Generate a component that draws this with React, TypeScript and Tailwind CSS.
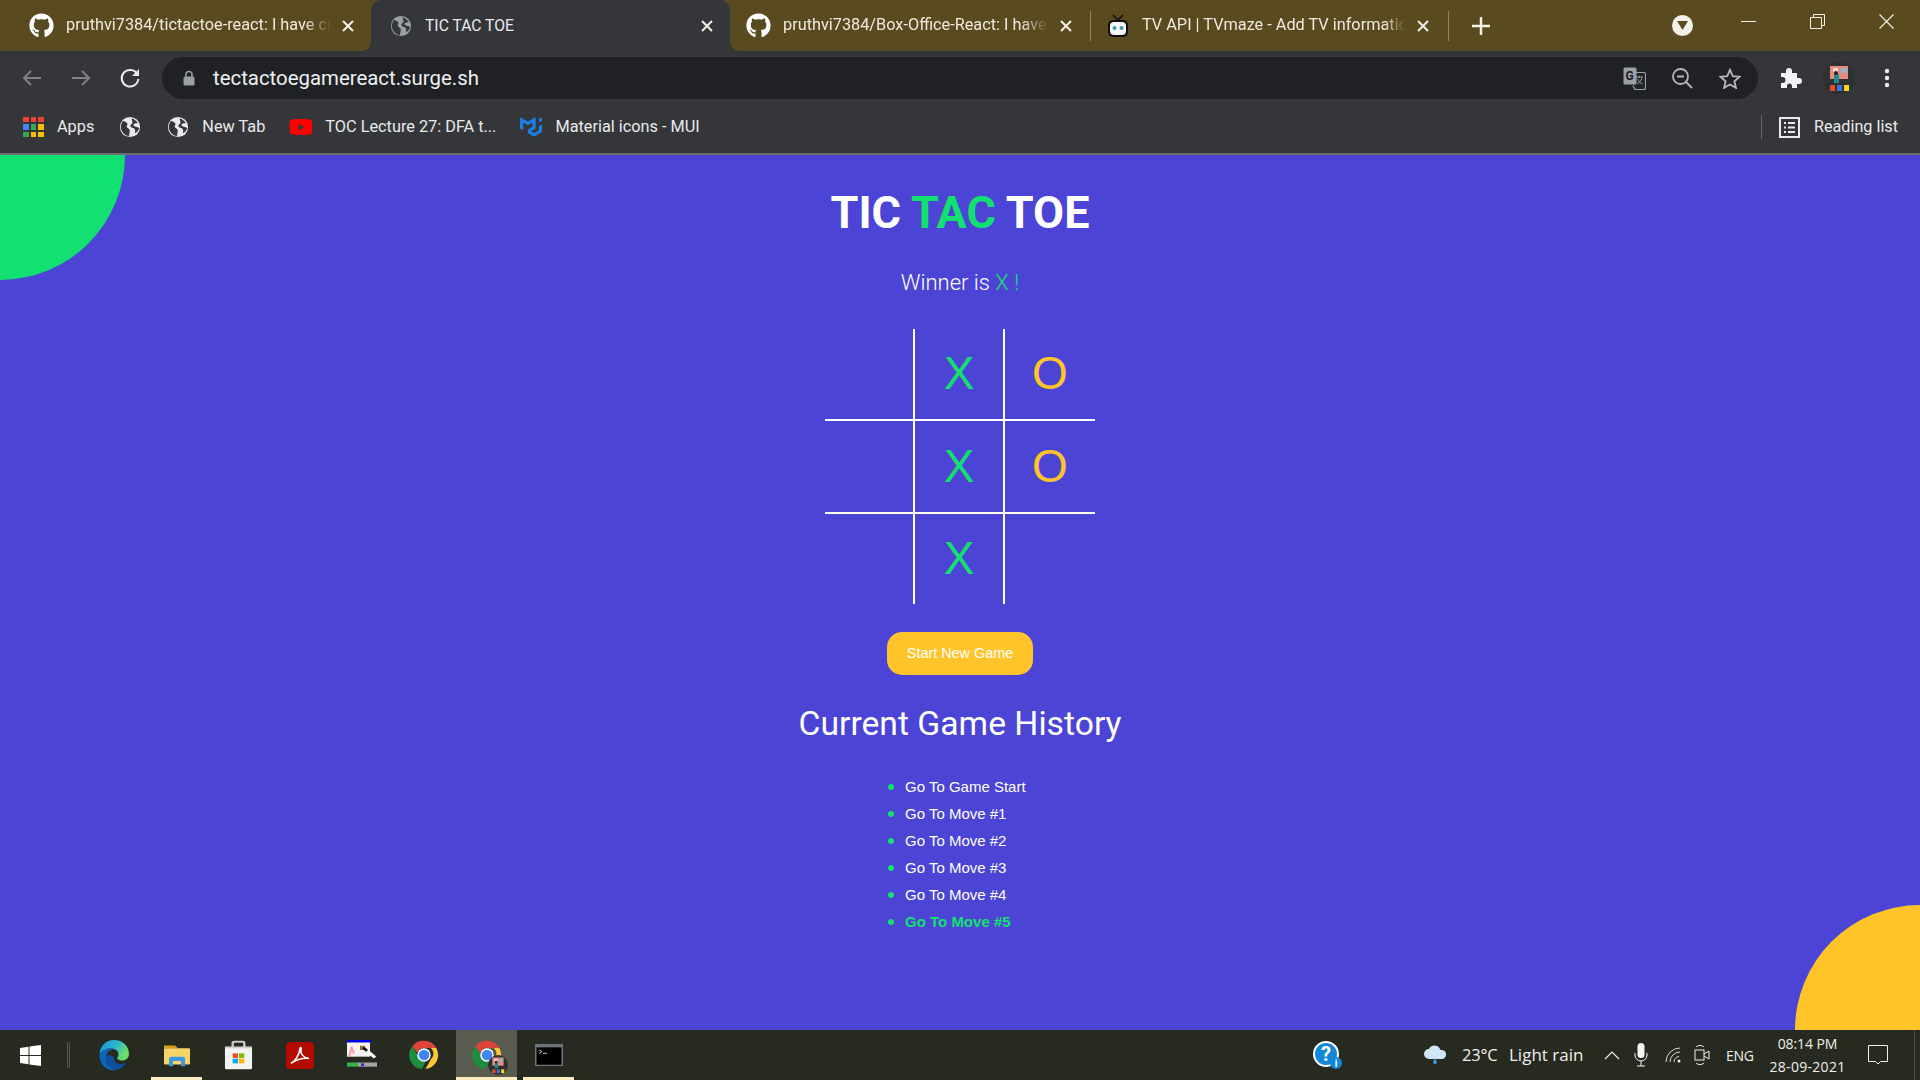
import React from "react";
import { FaGithub, FaYoutube } from "react-icons/fa";
import { SiMui } from "react-icons/si";

const Globe = ({ size = 22, fg = "#e8eaed", bg = "#35363a" }: { size?: number; fg?: string; bg?: string }) => (
  <svg width={size} height={size} viewBox="0 0 24 24" className="shrink-0">
    <circle cx="12" cy="12" r="11" fill={fg} />
    <path d="M4 5.5c2 .5 4 1 5 2.5s-1 2.500-.5 4 3 1.500 3.200 3.500-.7 4-.7 6.500C6 21.500 2.500 17 2 12.500 2 10 2.800 7.500 4 5.500zM14 2.500c2 .8 5 2.500 6.500 5-1.500.5-3.500 0-4.500 1.500s1 2.500 3 3 3 .5 2.800 2c-.8 2-2 3.500-4 5-.5-2 .3-3.500-1-5s-3.500-1-4.300-2.500 1-2 2-3.500-1-3.500-.5-5.500z" fill={bg} />
  </svg>
);

const Close = ({ c = "#f4f1ea" }: { c?: string }) => (
  <svg width="12" height="12" viewBox="0 0 12 12" className="shrink-0">
    <path d="M1 1l10 10M11 1L1 11" stroke={c} strokeWidth="2" />
  </svg>
);

const TvIcon = () => (
  <svg width="22" height="24" viewBox="0 0 22 24" className="shrink-0">
    <path d="M6 1l5 5 5-5" stroke="#111" strokeWidth="1.600" fill="none" />
    <rect x="1" y="6" width="20" height="17" rx="5" fill="#111" />
    <rect x="3" y="8" width="16" height="13" rx="4" fill="#f5f5f5" />
    <circle cx="7.500" cy="14" r="2" fill="#3f9c9c" />
    <circle cx="14.500" cy="14" r="2" fill="#3f9c9c" />
  </svg>
);

const Tab = ({ icon, title, w, textW, rounded, close }: { icon: React.ReactNode; title: string; w: string; textW: string; rounded: string; close: string }) => (
  <div className={`${w} h-full shrink-0 bg-[#35363a]`}>
    <div className={`h-full bg-[#5a4a20] ${rounded} flex items-center`}>
      {icon}
      <span className={`${textW} ${close} overflow-hidden whitespace-nowrap text-[16.3px] text-[#efeadf] [mask-image:linear-gradient(to_right,black_90%,transparent)]`}>{title}</span>
      <Close />
    </div>
  </div>
);

const Bookmark = ({ icon, text, cls }: { icon: React.ReactNode; text: string; cls: string }) => (
  <div className={`flex items-center ${cls}`}>
    {icon}
    <span className="whitespace-nowrap text-[16.3px] text-[#e8eaed]">{text}</span>
  </div>
);

const AppsIcon = () => {
  const colors = ["#ea4335", "#ea4335", "#ea4335", "#4285f4", "#34a853", "#fbbc04", "#34a853", "#fbbc04", "#fbbc04"];
  return (
    <div className="grid h-[20px] w-[21px] shrink-0 grid-cols-3 gap-[2px]">
      {colors.map((c, i) => (
        <span key={i} style={{ background: c }} />
      ))}
    </div>
  );
};

const Chrome = ({ size = 34 }: { size?: number }) => (
  <svg width={size} height={size} viewBox="0 0 48 48" className="shrink-0">
    <path d="M24 4a20 20 0 0 1 17.320 10H24a10 10 0 0 0-9.500 7L7.500 11.500A20 20 0 0 1 24 4z" fill="#db4437" />
    <path d="M41.320 14A20 20 0 0 1 26 43.900L34.500 29a10 10 0 0 0-1-15z" fill="#fcc934" />
    <path d="M7.500 11.500L16 26a10 10 0 0 0 10 8l-5 9.800A20 20 0 0 1 7.500 11.500z" fill="#1e8e3e" />
    <circle cx="24" cy="24" r="9.500" fill="#fff" />
    <circle cx="24" cy="24" r="7.500" fill="#4285f4" />
  </svg>
);

const Avatar = ({ size = 32 }: { size?: number }) => (
  <svg width={size} height={size} viewBox="0 0 32 32" className="shrink-0">
    <circle cx="16" cy="16" r="16" fill="#2f3033" />
    <rect x="7" y="4" width="18" height="13" fill="#e88a80" />
    <rect x="10" y="6" width="5" height="4" fill="#f3d6d0" />
    <rect x="18" y="6" width="6" height="5" fill="#8bb8c4" />
    <rect x="11" y="12" width="5" height="9" fill="#1a8a8a" />
    <circle cx="13" cy="11" r="2" fill="#222" />
    <rect x="7" y="23" width="5" height="6" fill="#e44d26" />
    <rect x="14" y="23" width="5" height="6" fill="#3f6fd8" />
    <rect x="21" y="23" width="5" height="6" fill="#f5d91d" />
  </svg>
);

const TabStrip = () => (
  <div className="flex h-[51px] shrink-0 bg-[#5a4a20]">
    <Tab
      w="w-[371px]"
      rounded="rounded-br-[9px]"
      icon={<FaGithub className="ml-[29px] mr-[12px] shrink-0 text-white" size={25} />}
      title="pruthvi7384/tictactoe-react: I have created"
      textW="w-[265px]"
      close="mr-[11px]"
    />
    <div className="flex h-full w-[359px] shrink-0 items-center rounded-t-[10px] bg-[#35363a]">
      <span className="ml-[19px] mr-[13px]"><Globe size={22} fg="#9aa0a6" /></span>
      <span className="w-[276px] whitespace-nowrap text-[15.7px] text-[#e8eaed]">TIC TAC TOE</span>
      <Close />
    </div>
    <Tab
      w="w-[360px]"
      rounded="rounded-bl-[9px]"
      icon={<FaGithub className="ml-[16px] mr-[12px] shrink-0 text-white" size={25} />}
      title="pruthvi7384/Box-Office-React: I have created"
      textW="w-[265px]"
      close="mr-[12px]"
    />
    <div className="my-auto h-[30px] w-px shrink-0 bg-[#8f8668]" />
    <div className="flex h-full w-[357px] shrink-0 items-center">
      <span className="ml-[16px] mr-[13px]"><TvIcon /></span>
      <span className="w-[263px] overflow-hidden whitespace-nowrap text-[16.3px] text-[#efeadf] [mask-image:linear-gradient(to_right,black_92%,transparent)]">TV API | TVmaze - Add TV information to your website</span>
      <span className="ml-[12px]"><Close /></span>
    </div>
    <div className="my-auto h-[30px] w-px shrink-0 bg-[#8f8668]" />
    <svg width="18" height="18" viewBox="0 0 18 18" className="my-auto ml-[23px] shrink-0">
      <path d="M9 0v18M0 9h18" stroke="#f4f1ea" strokeWidth="2.500" />
    </svg>
    <div className="my-auto ml-[182px] flex h-[21px] w-[21px] shrink-0 items-center justify-center rounded-full bg-[#f4f1ea]">
      <svg width="11" height="9" viewBox="0 0 11 9"><path d="M0 0h11L5.500 9z" fill="#5a4a20" /></svg>
    </div>
    <div className="mb-[8px] ml-[48px] flex w-[15px] shrink-0 items-center">
      <div className="h-px w-[15px] bg-[#f4f1ea]" />
    </div>
    <svg width="15" height="15" viewBox="0 0 15 15" className="ml-[54px] mt-[14px] shrink-0">
      <path d="M3.500 3.500V.5h11v11h-3M.5 3.500h11v11H.5z" fill="none" stroke="#f4f1ea" />
    </svg>
    <svg width="15" height="15" viewBox="0 0 15 15" className="ml-[54px] mt-[14px] shrink-0">
      <path d="M.5.5l14 14M14.500.5l-14 14" stroke="#f4f1ea" strokeWidth="1.100" />
    </svg>
  </div>
);

const Toolbar = () => (
  <div className="flex h-[54px] shrink-0 items-center bg-[#35363a]">
    <svg width="20" height="18" viewBox="0 0 20 18" className="ml-[22px] shrink-0">
      <path d="M19 9H2M9 2L2 9l7 7" fill="none" stroke="#7f8184" strokeWidth="2" />
    </svg>
    <svg width="20" height="18" viewBox="0 0 20 18" className="ml-[29px] shrink-0">
      <path d="M1 9h17M11 2l7 7-7 7" fill="none" stroke="#7f8184" strokeWidth="2" />
    </svg>
    <svg width="22" height="22" viewBox="0 0 22 22" className="ml-[28px] shrink-0">
      <path d="M18.200 7A8.300 8.300 0 1 0 19.300 12" fill="none" stroke="#e8eaed" strokeWidth="2" />
      <path d="M20 2v7h-7z" fill="#e8eaed" />
    </svg>
    <div className="ml-[21px] flex h-[42px] w-[1596px] shrink-0 items-center rounded-full bg-[#202124]">
      <svg width="12" height="16" viewBox="0 0 12 16" className="ml-[21px] shrink-0">
        <path d="M3 7V4.500a3 3 0 0 1 6 0V7" fill="none" stroke="#9aa0a6" strokeWidth="1.500" />
        <rect x="0.500" y="6.500" width="11" height="9" rx="1.500" fill="#9aa0a6" />
      </svg>
      <span className="ml-[18px] w-[1410px] whitespace-nowrap text-[20.4px] text-[#eef0f2]">tectactoegamereact.surge.sh</span>
      <svg width="23" height="23" viewBox="0 0 23 23" className="shrink-0">
        <rect x="0.500" y="0.500" width="13" height="17" rx="1.500" fill="#9aa0a6" />
        <text x="2.500" y="13" fontSize="12" fontWeight="700" fontFamily="Roboto" fill="#202124">G</text>
        <path d="M10 5.500h11a1.500 1.500 0 0 1 1.500 1.500v14a1.500 1.500 0 0 1-1.500 1.500H12l-2-4" fill="none" stroke="#9aa0a6" strokeWidth="1.200" />
        <path d="M13 10h7M16.500 9v2M19 11c-1 3-3 5-5 6M14.500 12c1 2 2.500 4 5 5" fill="none" stroke="#9aa0a6" strokeWidth="1" />
      </svg>
      <svg width="21" height="21" viewBox="0 0 21 21" className="ml-[26px] shrink-0">
        <circle cx="8.500" cy="8.500" r="7.500" fill="none" stroke="#b5b7ba" strokeWidth="1.800" />
        <path d="M5 8.500h7M14 14l6 6" stroke="#b5b7ba" strokeWidth="1.800" />
      </svg>
      <svg width="22" height="21" viewBox="0 0 24 23" className="ml-[26px] shrink-0">
        <path d="M12 2l3 7 7.500.6-5.700 4.900 1.700 7.300L12 18l-6.500 3.800 1.700-7.300L1.500 9.600 9 9z" fill="none" stroke="#b5b7ba" strokeWidth="2" />
      </svg>
    </div>
    <svg width="22" height="22" viewBox="0 0 22 22" className="ml-[22px] shrink-0">
      <path d="M1 6h5V4a3 3 0 0 1 6 0v2h5v5h2a3 3 0 0 1 0 6h-2v4h-5v-2a2.500 2.500 0 0 0-5 0v2H1v-5h1.500a3 3 0 0 0 0-6H1z" fill="#f1f3f4" />
    </svg>
    <span className="ml-[21px]"><Avatar size={32} /></span>
    <svg width="6" height="20" viewBox="0 0 6 20" className="ml-[29px] shrink-0">
      <circle cx="3" cy="3" r="2.200" fill="#e8eaed" />
      <circle cx="3" cy="10" r="2.200" fill="#e8eaed" />
      <circle cx="3" cy="17" r="2.200" fill="#e8eaed" />
    </svg>
  </div>
);

const Bookmarks = () => (
  <div className="flex h-[50px] shrink-0 items-center border-b-2 border-[#6c6d70] bg-[#35363a] pb-[4px] pr-[22px]">
    <div className="ml-[23px]"><AppsIcon /></div>
    <span className="ml-[13px] text-[16.3px] text-[#e8eaed]">Apps</span>
    <span className="ml-[25px]"><Globe size={22} /></span>
    <Bookmark cls="ml-[26px] gap-[13px]" icon={<Globe size={22} />} text="New Tab" />
    <Bookmark cls="ml-[24px] gap-[12px]" icon={<FaYoutube className="shrink-0 text-[#ff0000]" size={24} />} text="TOC Lecture 27: DFA t..." />
    <Bookmark cls="ml-[24px] gap-[13px]" icon={<SiMui className="shrink-0 text-[#1a7fe0]" size={22} />} text="Material icons - MUI" />
    <div className="ml-auto h-[24px] w-px shrink-0 bg-[#65666a]" />
    <svg width="21" height="21" viewBox="0 0 21 21" className="ml-[17px] shrink-0">
      <rect x="1" y="1" width="19" height="19" fill="none" stroke="#e8eaed" strokeWidth="2" />
      <path d="M5 6h2M9 6h7M5 10.500h2M9 10.500h7M5 15h2M9 15h7" stroke="#e8eaed" strokeWidth="2" />
    </svg>
    <span className="ml-[14px] text-[16.2px] text-[#e8eaed]">Reading list</span>
  </div>
);

const Cell = ({ v, cls }: { v?: "X" | "O"; cls?: string }) => (
  <div className={`flex items-center justify-center pb-[2px] font-['Liberation_Sans',sans-serif] text-[46px] font-normal leading-none ${v === "O" ? "text-[#ffc42a]" : "text-[#12e070]"} ${cls ?? ""}`}>
    {v}
  </div>
);

const Game = () => {
  const moves = ["Go To Game Start", "Go To Move #1", "Go To Move #2", "Go To Move #3", "Go To Move #4"];
  return (
    <div className="relative flex flex-1 flex-col items-center overflow-hidden bg-[#4c44d4] font-['Roboto',sans-serif] text-white">
      <div className="absolute -left-[125px] -top-[125px] h-[250px] w-[250px] rounded-full bg-[#12e070]" />
      <div className="absolute -bottom-[125px] -right-[125px] h-[250px] w-[250px] rounded-full bg-[#ffc42a]" />
      <h1 className="mt-[28px] text-[45px] font-bold leading-[60px]">
        TIC <span className="text-[#12e070]">TAC</span> TOE
      </h1>
      <p className="mt-[25px] text-[22px] font-light leading-[30px]">
        Winner is <span className="text-[#12e070]">X !</span>
      </p>
      <div className="mt-[31px] grid w-[270px] grid-cols-[90px_90px_90px] grid-rows-[92px_93px_90px]">
        <Cell cls="border-b-2 border-r-2 border-white" />
        <Cell v="X" cls="border-b-2 border-r-2 border-white" />
        <Cell v="O" cls="border-b-2 border-white" />
        <Cell cls="border-b-2 border-r-2 border-white" />
        <Cell v="X" cls="border-b-2 border-r-2 border-white" />
        <Cell v="O" cls="border-b-2 border-white" />
        <Cell cls="border-r-2 border-white" />
        <Cell v="X" cls="border-r-2 border-white" />
        <Cell />
      </div>
      <button className="mt-[28px] h-[43px] w-[146px] rounded-[15px] bg-[#ffc42a] font-['Liberation_Sans',sans-serif] text-[14.4px] text-white">
        Start New Game
      </button>
      <h2 className="mt-[27px] text-[33.7px] font-normal leading-[44px]">Current Game History</h2>
      <ul className="mt-[27px] w-[144px] self-center font-['Liberation_Sans',sans-serif] text-[15px] leading-[27px]">
        {moves.map((m) => (
          <li key={m} className="flex items-center">
            <span className="mr-[11px] h-[6px] w-[6px] shrink-0 rounded-full bg-[#12e070]" />
            {m}
          </li>
        ))}
        <li className="flex items-center font-bold text-[#12e070]">
          <span className="mr-[11px] h-[6px] w-[6px] shrink-0 rounded-full bg-[#12e070]" />
          Go To Move #5
        </li>
      </ul>
    </div>
  );
};

const EdgeIcon = () => (
  <svg width="32" height="32" viewBox="0 0 32 32" className="shrink-0">
    <defs>
      <linearGradient id="eg" x1="0" y1="0" x2="1" y2="0.400">
        <stop offset="0" stopColor="#1a8fd8" />
        <stop offset="0.550" stopColor="#2ab6cf" />
        <stop offset="1" stopColor="#6fdb6a" />
      </linearGradient>
    </defs>
    <path d="M16 1c8.500 0 15 6 15 14 0 4-3 6.500-7 6.500-2.500 0-5-1-5-2.500 2-1.500 2.500-6-1.500-8.500C12 8 5 10 1.500 15 2 7 8 1 16 1z" fill="url(#eg)" />
    <path d="M1.500 15C5 10 12 8 17.500 10.500c-5-1-9.500 3-9.500 8 0 6 4 11 10 12.500-1 .3-2 .4-3 .4C7 31 1 24 1.500 15z" fill="#0c65b8" />
    <path d="M8 18.500c0 6 4 11 10 12.500 4-.5 8-3.500 10-7.500-5 3.500-12 1.500-12-5-2-3-8-3.500-8 0z" fill="#0f4f9c" />
  </svg>
);

const FolderIcon = () => (
  <svg width="28" height="24" viewBox="0 0 28 28" preserveAspectRatio="none" className="shrink-0">
    <path d="M1 3h11l3 3h-14z" fill="#d9a01c" />
    <rect x="1" y="6" width="26" height="19" rx="1" fill="#f7d467" />
    <path d="M6 27v-9a2 2 0 0 1 2-2h12a2 2 0 0 1 2 2v9h-4v-6h-8v6z" fill="#3a9be0" />
  </svg>
);

const StoreIcon = () => (
  <svg width="29" height="30" viewBox="0 0 30 36" preserveAspectRatio="none" className="shrink-0">
    <path d="M9 9V3.500a1.500 1.500 0 0 1 1.500-1.500h9A1.500 1.500 0 0 1 21 3.500V9" fill="none" stroke="#c8c8c8" strokeWidth="2.500" />
    <path d="M1 8h28v26a1 1 0 0 1-1 1H2a1 1 0 0 1-1-1z" fill="#f3f3f3" />
    <rect x="1" y="8" width="28" height="2" fill="#cfcfcf" />
    <rect x="9" y="16" width="5.500" height="5.500" fill="#f25022" />
    <rect x="15.500" y="16" width="5.500" height="5.500" fill="#7fba00" />
    <rect x="9" y="22.500" width="5.500" height="5.500" fill="#00a4ef" />
    <rect x="15.500" y="22.500" width="5.500" height="5.500" fill="#ffb900" />
  </svg>
);

const PdfIcon = () => (
  <svg width="28" height="27" viewBox="0 0 28 28" preserveAspectRatio="none" className="shrink-0">
    <rect width="28" height="28" rx="4" fill="#b30b00" />
    <path d="M5 22c4-2 8-8 9-15 .3-2 1.500-1.500 1 1-.8 4 1.500 8 8 9-5-.5-12 1-18 5z" fill="none" stroke="#fff" strokeWidth="1.600" />
  </svg>
);

const ToolIcon = () => (
  <svg width="30" height="30" viewBox="0 0 30 36" preserveAspectRatio="none" className="shrink-0">
    <rect x="0" y="0" width="24" height="3" fill="#0000f0" />
    <rect x="0" y="3" width="23" height="17" fill="#f3f3f3" />
    <path d="M5 8l-3 12M4 8l3 8" stroke="#f29aa5" strokeWidth="2" fill="none" />
    <rect x="13" y="7" width="5" height="5" fill="#9a6a10" />
    <path d="M16 9l12 12" stroke="#ffffff" strokeWidth="3.500" />
    <path d="M16 9l4 4" stroke="#111" strokeWidth="3" />
    <rect x="0" y="27" width="11" height="5" fill="#37b34a" />
    <rect x="11" y="27" width="19" height="5" fill="#a5a5a5" />
    <rect x="14" y="28" width="3" height="3" fill="#2030c0" />
  </svg>
);

const CmdIcon = () => (
  <svg width="28" height="22" viewBox="0 0 28 26" preserveAspectRatio="none" className="shrink-0">
    <rect width="28" height="26" fill="#6f7379" />
    <rect x="1.500" y="4" width="25" height="20.500" fill="#000" />
    <path d="M4 7l3 2-3 2M8 11h4" stroke="#ccc" fill="none" />
  </svg>
);

const TaskSlot = ({ cls, children, bar }: { cls: string; children: React.ReactNode; bar?: string }) => (
  <div className={`relative flex h-full shrink-0 items-center justify-center ${cls}`}>
    {children}
    {bar && <div className={`absolute bottom-0 h-[3px] bg-[#fdeec2] ${bar}`} />}
  </div>
);

const Taskbar = () => (
  <div className="flex h-[50px] shrink-0 items-center bg-[#272a21] font-['Open_Sans',sans-serif] text-[#f0f0ea]">
    <svg width="21" height="21" viewBox="0 0 21 21" className="ml-[20px] shrink-0">
      <path d="M0 3l8.500-1.200V10H0zM9.500 1.600L21 0v10H9.500zM0 11h8.500v8.200L0 18zM9.500 11H21v10l-11.500-1.600z" fill="#fff" />
    </svg>
    <div className="ml-[26px] h-[26px] w-[3px] shrink-0 border-x border-[#55574e]" />
    <TaskSlot cls="ml-[28px] w-[32px]"><EdgeIcon /></TaskSlot>
    <TaskSlot cls="ml-[21px] w-[51px]" bar="inset-x-0"><FolderIcon /></TaskSlot>
    <TaskSlot cls="ml-[21px] w-[30px]"><StoreIcon /></TaskSlot>
    <TaskSlot cls="ml-[33px] w-[28px]"><PdfIcon /></TaskSlot>
    <TaskSlot cls="ml-[33px] w-[30px]"><ToolIcon /></TaskSlot>
    <TaskSlot cls="ml-[32px] w-[30px]"><Chrome size={34} /></TaskSlot>
    <TaskSlot cls="ml-[17px] w-[61px] bg-[#5a5b4f]" bar="inset-x-0">
      <div className="relative"><Chrome size={34} /><div className="absolute -bottom-[3px] -right-[4px]"><Avatar size={20} /></div></div>
    </TaskSlot>
    <TaskSlot cls="ml-[6px] w-[51px]" bar="inset-x-0"><CmdIcon /></TaskSlot>
    <svg width="30" height="30" viewBox="0 0 30 30" className="ml-[739px] shrink-0">
      <circle cx="13" cy="14" r="12" fill="#1488d8" stroke="#fff" strokeWidth="2" />
      <text x="13" y="21" textAnchor="middle" fontSize="20" fontWeight="700" fontFamily="Roboto" fill="#fff">?</text>
      <circle cx="23" cy="23" r="6" fill="#1488d8" />
      <text x="23" y="27" textAnchor="middle" fontSize="10" fontWeight="700" fontFamily="Roboto" fill="#fff">i</text>
    </svg>
    <svg width="26" height="22" viewBox="0 0 26 22" className="ml-[80px] shrink-0">
      <path d="M6 15a5 5 0 0 1 0-10c1-3 5-4.500 8-3 2 1 3 2.500 3.500 4a4.500 4.500 0 0 1 2 9z" fill="#cfe6f7" />
      <path d="M12 14l2 4a2 2 0 0 1-4 0z" fill="#3f9be0" />
    </svg>
    <span className="ml-[13px] w-[37px] whitespace-nowrap text-[16.5px] tracking-[-0.2px]">23°C</span>
    <span className="ml-[10px] w-[74px] whitespace-nowrap text-[17px]">Light rain</span>
    <svg width="16" height="9" viewBox="0 0 16 9" className="ml-[21px] shrink-0">
      <path d="M1 8l7-7 7 7" fill="none" stroke="#f0f0ea" strokeWidth="1.200" />
    </svg>
    <svg width="14" height="24" viewBox="0 0 14 24" className="ml-[14px] shrink-0">
      <rect x="3.500" y="0" width="7" height="15" rx="3.500" fill="#f5f5f5" />
      <path d="M1 10v2a6 6 0 0 0 12 0v-2M7 18v5M3 23h8" fill="none" stroke="#f5f5f5" />
    </svg>
    <svg width="16" height="16" viewBox="0 0 16 16" className="ml-[17px] shrink-0">
      <path d="M1 15A14 14 0 0 1 15 1M5 15A10 10 0 0 1 15 5M9 15a6 6 0 0 1 5-5.500" fill="none" stroke="#d8d8d0" />
      <circle cx="14" cy="14" r="1.500" fill="#f0f0ea" />
    </svg>
    <svg width="16" height="22" viewBox="0 0 16 22" className="ml-[13px] shrink-0">
      <rect x="1" y="6" width="9" height="10" fill="none" stroke="#f0f0ea" />
      <path d="M10 10l5-3v8l-5-3M2 3c2-2 6-2 8 0M2 19c2 2 6 2 8 0" fill="none" stroke="#f0f0ea" />
    </svg>
    <span className="ml-[16px] w-[28px] text-[14px] tracking-[-0.3px]">ENG</span>
    <div className="ml-[15px] flex w-[77px] shrink-0 flex-col items-center text-[14px] leading-[23px]">
      <span className="whitespace-nowrap tracking-[-0.1px]">08:14 PM</span>
      <span className="whitespace-nowrap tracking-[0.3px]">28-09-2021</span>
    </div>
    <svg width="20" height="20" viewBox="0 0 20 20" className="ml-[22px] shrink-0">
      <path d="M.5.500h19v16h-7l-2.500 2.500-2.500-2.500h-7z" fill="none" stroke="#f0f0ea" />
    </svg>
    <div className="ml-[26px] h-full w-px shrink-0 bg-[#4a4c42]" />
  </div>
);

export default function App() {
  return (
    <div className="flex h-[1080px] w-[1920px] flex-col overflow-hidden font-['Roboto',sans-serif]">
      <TabStrip />
      <Toolbar />
      <Bookmarks />
      <Game />
      <Taskbar />
    </div>
  );
}
